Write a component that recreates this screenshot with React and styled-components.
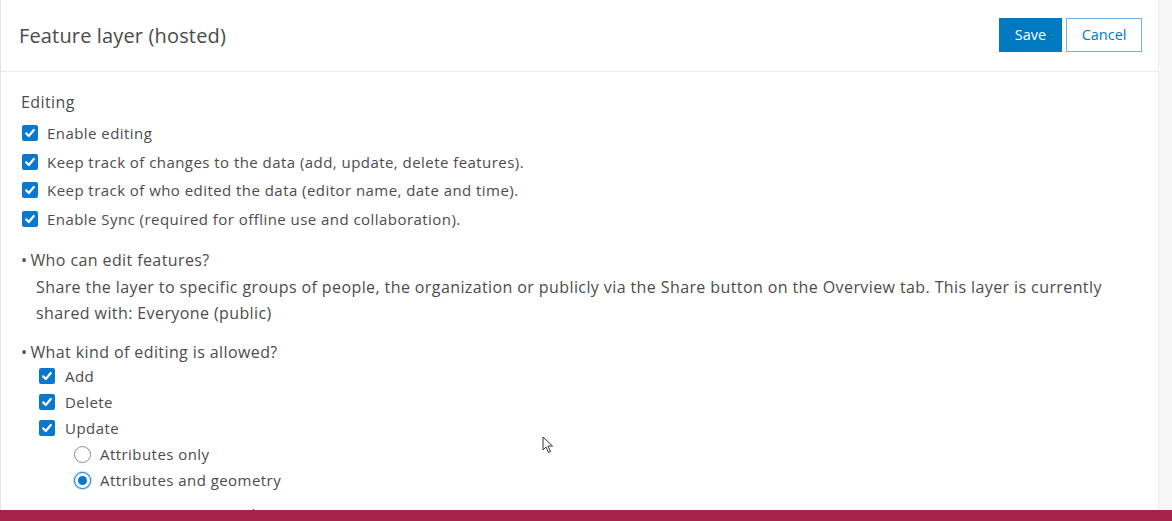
import React from "react";
import styled, { createGlobalStyle } from "styled-components";

const blue = "#0079c1";
const checkBlue = "#0b78d0";
const textColor = "#4c4c4c";

const GlobalStyle = createGlobalStyle`
    html, body {
        margin: 0;
        padding: 0;
        height: 521px;
        overflow: hidden;
        background: #ffffff;
    }
    body {
        font-family: "Open Sans", "Lato", sans-serif;
        color: ${textColor};
    }
`;

const data = {
    title: "Feature layer (hosted)",
    section: "Editing",
    options: [
        "Enable editing",
        "Keep track of changes to the data (add, update, delete features).",
        "Keep track of who edited the data (editor name, date and time).",
        "Enable Sync (required for offline use and collaboration).",
    ],
    whoTitle: "Who can edit features?",
    whoText:
        "Share the layer to specific groups of people, the organization or publicly via the Share button on the Overview tab. This layer is currently shared with: Everyone (public)",
    kindTitle: "What kind of editing is allowed?",
    kinds: ["Add", "Delete", "Update"],
    updateModes: [
        { label: "Attributes only", checked: false },
        { label: "Attributes and geometry", checked: true },
    ],
    more: "Manage geometry updates",
};

const Page = styled.div`
    display: flex;
    height: 521px;
    position: relative;
`;

const Panel = styled.div`
    flex: 1;
    border-left: 1px solid #e4e4e4;
    background: #ffffff;
    display: flex;
    flex-direction: column;
    min-height: 0;
`;

const Gutter = styled.div`
    width: 13px;
    background: #f6f6f6;
    border-left: 1px solid #ececec;
`;

const Header = styled.div`
    flex: none;
    height: 71px;
    display: flex;
    align-items: center;
    justify-content: space-between;
    padding: 0 16px 0 18px;
    border-bottom: 1px solid #ebebeb;
`;

const Title = styled.h1`
    margin: 0;
    font-size: 20px;
    font-weight: 400;
    letter-spacing: 0.15px;
    color: #4a4a4a;
`;

const Actions = styled.div`
    display: flex;
    gap: 4px;
    margin-top: -2px;
`;

const Button = styled.button`
    height: 34px;
    padding: 0 ${({ $primary }) => ($primary ? 15 : 14.5)}px;
    font-family: inherit;
    font-size: 14.5px;
    border: 1px solid ${({ $primary }) => ($primary ? blue : "#6fb2e3")};
    background: ${({ $primary }) => ($primary ? blue : "#ffffff")};
    color: ${({ $primary }) => ($primary ? "#ffffff" : blue)};
    cursor: pointer;
`;

const Body = styled.div`
    flex: 1;
    min-height: 0;
    overflow: hidden;
    padding: 18px 20px 0 20px;
`;

const SectionTitle = styled.div`
    font-size: 16px;
    letter-spacing: 0.4px;
    line-height: 24px;
    margin-bottom: 5px;
`;

const Row = styled.label`
    display: flex;
    align-items: center;
    height: ${({ $h }) => $h || 28.5}px;
    font-size: 15px;
    letter-spacing: 0.45px;
    gap: ${({ $gap }) => $gap || 9}px;
    padding-left: ${({ $indent }) => $indent || 1}px;
    margin-top: ${({ $top }) => $top || 0}px;
`;

const Box = styled.span`
    width: 16px;
    height: 16px;
    border-radius: 2px;
    background: ${checkBlue};
    display: inline-flex;
    align-items: center;
    justify-content: center;
    flex: none;
`;

const Radio = styled.span`
    width: 15px;
    height: 15px;
    border-radius: 50%;
    border: 1px solid ${({ $checked }) => ($checked ? checkBlue : "#8c8c8c")};
    box-shadow: ${({ $checked }) => ($checked ? "0 0 0 1px #b9dcf7" : "none")};
    display: inline-flex;
    align-items: center;
    justify-content: center;
    flex: none;
    background: #ffffff;

    &::after {
        content: "";
        width: 9px;
        height: 9px;
        border-radius: 50%;
        background: ${({ $checked }) => ($checked ? checkBlue : "transparent")};
    }
`;

const Bullet = styled.div`
    font-size: 16px;
    letter-spacing: 0.4px;
    line-height: 22px;
    margin-top: ${({ $top }) => $top}px;
    &::before {
        content: "•";
        margin-right: 3px;
    }
`;

const Paragraph = styled.p`
    margin: 3px 0 0 15px;
    font-size: 16px;
    letter-spacing: 0.4px;
    line-height: 26px;
`;

const SubList = styled.div`
    padding-left: 17px;
`;

const RadioList = styled.div`
    padding-left: 35px;
`;

const BottomBar = styled.div`
    position: absolute;
    left: 0;
    right: 0;
    bottom: 0;
    height: 11px;
    background: #a8224c;
`;

const Pointer = styled.svg`
    position: absolute;
    left: 542px;
    top: 436px;
`;

function Check() {
    return (
        <svg width="12" height="12" viewBox="0 0 12 12">
            <path
                d="M2.2 6.4 L4.8 9 L9.8 3"
                fill="none"
                stroke="#ffffff"
                strokeWidth="2.2"
                strokeLinecap="round"
                strokeLinejoin="round"
            />
        </svg>
    );
}

function CheckRow({ label, ...rest }) {
    return (
        <Row {...rest}>
            <Box>
                <Check />
            </Box>
            {label}
        </Row>
    );
}

export default function App() {
    return (
        <>
            <GlobalStyle />
            <Page>
                <Panel>
                    <Header>
                        <Title>{data.title}</Title>
                        <Actions>
                            <Button $primary>Save</Button>
                            <Button>Cancel</Button>
                        </Actions>
                    </Header>
                    <Body>
                        <SectionTitle>{data.section}</SectionTitle>
                        {data.options.map((o) => (
                            <CheckRow key={o} label={o} />
                        ))}
                        <Bullet $top={16}>{data.whoTitle}</Bullet>
                        <Paragraph>{data.whoText}</Paragraph>
                        <Bullet $top={15}>{data.kindTitle}</Bullet>
                        <SubList>
                            {data.kinds.map((k) => (
                                <CheckRow key={k} label={k} $h={26} $gap={10} />
                            ))}
                            <RadioList>
                                {data.updateModes.map((m) => (
                                    <Row key={m.label} $h={26} $gap={9}>
                                        <Radio $checked={m.checked} />
                                        {m.label}
                                    </Row>
                                ))}
                                <Row $h={26} $indent={16} $top={8}>
                                    {data.more}
                                </Row>
                            </RadioList>
                        </SubList>
                    </Body>
                </Panel>
                <Gutter />
                <BottomBar />
                <Pointer width="12" height="18" viewBox="0 0 12 18">
                    <path
                        d="M1 1 L1 14 L4 11 L6.5 16.5 L8.5 15.5 L6 10 L10.5 10 Z"
                        fill="#ffffff"
                        stroke="#333333"
                        strokeWidth="1"
                        strokeLinejoin="round"
                    />
                </Pointer>
            </Page>
        </>
    );
}
